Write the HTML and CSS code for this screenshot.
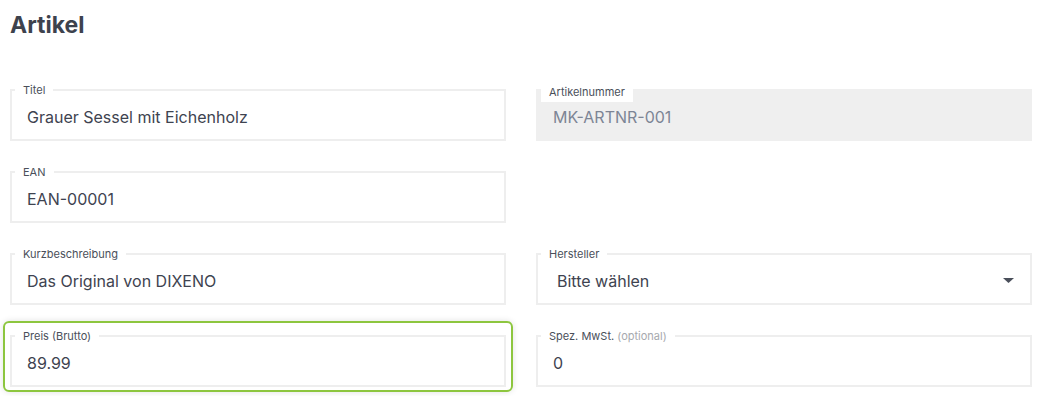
FILE: index.html
```
<!DOCTYPE html>
<html lang="de">
<head>
    <meta charset="UTF-8">
    <meta name="viewport" content="width=device-width, initial-scale=1.0">
    <title>Artikel</title>
    <link rel="stylesheet" href="styles.css">
</head>
<body>

    <div class="page">
        <h1 class="page-title">Artikel</h1>

        <form class="form-grid">
            <div class="cell">
                <div class="field">
                    <span class="field-label">Titel</span>
                    <input class="field-input" type="text" value="Grauer Sessel mit Eichenholz">
                </div>
            </div>
            <div class="cell">
                <div class="field is-disabled">
                    <span class="field-label">Artikelnummer</span>
                    <input class="field-input" type="text" value="MK-ARTNR-001" disabled>
                </div>
            </div>

            <div class="cell">
                <div class="field">
                    <span class="field-label">EAN</span>
                    <input class="field-input" type="text" value="EAN-00001">
                </div>
            </div>
            <div class="cell"></div>

            <div class="cell">
                <div class="field">
                    <span class="field-label">Kurzbeschreibung</span>
                    <input class="field-input" type="text" value="Das Original von DIXENO">
                </div>
            </div>
            <div class="cell">
                <div class="field">
                    <span class="field-label">Hersteller</span>
                    <div class="field-input field-select">
                        <span>Bitte wählen</span>
                        <svg class="select-arrow" width="11" height="5" viewBox="0 0 11 5"><path d="M0 0h11L5.5 5z" fill="#4a4f5a"/></svg>
                    </div>
                </div>
            </div>

            <div class="cell is-focused">
                <div class="field">
                    <span class="field-label">Preis (Brutto)</span>
                    <input class="field-input" type="text" value="89.99">
                </div>
            </div>
            <div class="cell">
                <div class="field">
                    <span class="field-label">Spez. MwSt. <span class="optional">(optional)</span></span>
                    <input class="field-input" type="text" value="0">
                </div>
            </div>
        </form>
    </div>

</body>
</html>
```

FILE: styles.css
```
body {
    margin: 0;
    padding: 0;
    background: #fff;
    font-family: 'Inter', 'Liberation Sans', sans-serif;
    color: #3e4350;
}

.page {
    padding: 10px 6px 20px 10px;
}

.page-title {
    margin: 0;
    font-size: 23px;
    line-height: 30px;
    font-weight: 700;
    color: #3d424d;
}

.form-grid {
    display: grid;
    grid-template-columns: 496px 496px;
    grid-auto-rows: 52px;
    column-gap: 30px;
    row-gap: 30px;
    margin-top: 49px;
}

.cell {
    box-sizing: border-box;
}

.field {
    position: relative;
    height: 52px;
    box-sizing: border-box;
    border: 2px solid #eeeeee;
    background: #fff;
}

.field.is-disabled {
    border-color: #efefef;
    background: #efefef;
}

.field-label {
    position: absolute;
    top: -8px;
    left: 3px;
    padding: 0 8px;
    background: #fff;
    font-size: 11px;
    line-height: 15px;
    color: #4a4f5a;
}

.field.is-disabled .field-label {
    line-height: 19px;
}

.optional {
    color: #a6a9ae;
}

.field-input {
    display: block;
    width: 100%;
    height: 48px;
    box-sizing: border-box;
    padding: 3px 15px 0;
    border: none;
    outline: none;
    background: transparent;
    font-family: inherit;
    font-size: 16px;
    color: #3e4350;
}

.field-input:disabled {
    color: #7d8595;
    -webkit-text-fill-color: #7d8595;
    opacity: 1;
}

.field-select {
    display: flex;
    align-items: center;
    justify-content: space-between;
    padding: 3px 16px 0 19px;
}

.select-arrow {
    flex-shrink: 0;
}

.cell.is-focused {
    align-self: start;
    height: 71px;
    margin: -14px -7px 0;
    padding: 12px 5px 3px;
    border: 2px solid #8dc63f;
    border-radius: 6px;
    box-shadow: 0 0 6px rgba(0, 0, 0, 0.12);
}
```
